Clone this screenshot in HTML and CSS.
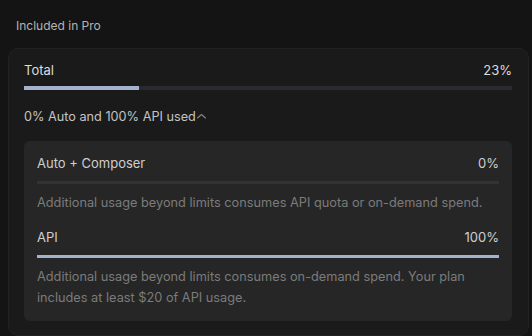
FILE: index.html
```html
<!DOCTYPE html>
<html>
<head>
<meta charset="utf-8">
<link rel="stylesheet" href="styles.css">
</head>
<body>
<div class="page">
  <div class="heading">Included in Pro</div>
  <div class="card">
    <div class="row total">
      <span>Total</span><span>23%</span>
    </div>
    <div class="bar big"><div class="fill" style="width:23.5%"></div></div>
    <div class="summary">0% Auto and 100% API used<svg class="chev" width="11" height="12" viewBox="0 0 11 12"><path d="M1.5 7 L5.5 3.5 L9.5 7" fill="none" stroke="#858585" stroke-width="1.1" stroke-linecap="round" stroke-linejoin="round"/></svg></div>
    <div class="inner">
      <div class="row item"><span>Auto + Composer</span><span>0%</span></div>
      <div class="bar small"><div class="fill" style="width:0%"></div></div>
      <p class="desc">Additional usage beyond limits consumes API quota or on-demand spend.</p>
      <div class="row item api"><span>API</span><span>100%</span></div>
      <div class="bar small"><div class="fill" style="width:100%"></div></div>
      <p class="desc">Additional usage beyond limits consumes on-demand spend. Your plan includes at least $20 of API usage.</p>
    </div>
  </div>
</div>
</body>
</html>
```

FILE: styles.css
```css
html, body {
  margin: 0;
  padding: 0;
  background: #141414;
}
body {
  font-family: Inter, "Noto Sans", sans-serif;
  color: #d6d6d6;
  -webkit-font-smoothing: antialiased;
}
.page {
  padding: 17px 3px 0 8px;
}
.heading {
  font-size: 12px;
  color: #b5b5b5;
  padding-left: 8px;
  line-height: 18px;
}
.card {
  margin-top: 13px;
  background: #1a1a1a;
  border: 1px solid #222;
  border-radius: 10px;
  padding: 12px 16px 14px 15px;
}
.row {
  display: flex;
  justify-content: space-between;
}
.total {
  font-size: 13px;
  line-height: 18px;
  color: #dcdcdc;
}
.bar {
  background: #2a2a31;
  position: relative;
  overflow: hidden;
}
.bar .fill {
  height: 100%;
  background: #a4b3cd;
}
.bar.big {
  height: 4px;
  margin-top: 7px;
}
.summary {
  margin-top: 18px;
  font-size: 12.7px;
  line-height: 18px;
  color: #c4c4c4;
  display: flex;
  align-items: center;
}
.inner {
  margin-top: 15px;
  background: #262626;
  border-radius: 6px;
  padding: 13px 13px 13px 13px;
}
.item {
  font-size: 13px;
  line-height: 18px;
  color: #cfcfcf;
}
.bar.small {
  height: 3px;
  margin-top: 9px;
  background: #333336;
}
.desc {
  margin: 8px 0 0 0;
  font-size: 12.75px;
  line-height: 21px;
  color: #7b7b7b;
}
.api {
  margin-top: 15px;
}
```
